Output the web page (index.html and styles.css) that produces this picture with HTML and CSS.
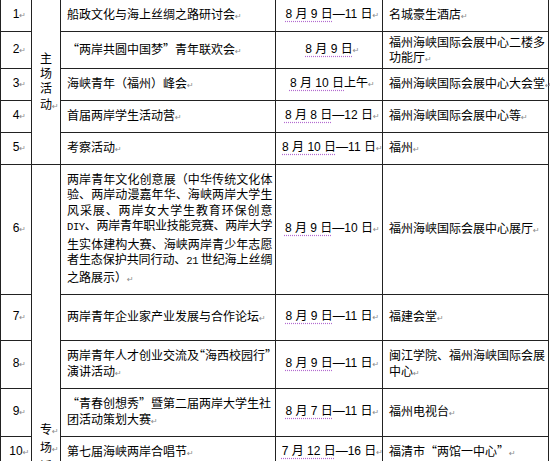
FILE: index.html
```html
<!DOCTYPE html>
<html lang="zh-CN">
<head>
<meta charset="utf-8">
<title>活动安排</title>
<link rel="stylesheet" href="styles.css">
</head>
<body>
<table class="schedule">
  <colgroup>
    <col class="c-no"><col class="c-grp"><col class="c-act"><col class="c-date"><col class="c-place">
  </colgroup>
  <tbody>
    <tr class="h32">
      <td class="no">1<span class="pm">↵</span></td>
      <td class="grp" rowspan="5"><div class="gc">主</div><div class="gc">场</div><div class="gc">活</div><div class="gc">动<span class="pm">↵</span></div></td>
      <td class="act">船政文化与海上丝绸之路研讨会<span class="pm">↵</span></td>
      <td class="date"><span class="ul">8 月 9 日</span>—11 日<span class="pm">↵</span></td>
      <td class="place">名城豪生酒店<span class="pm">↵</span></td>
    </tr>
    <tr class="h32">
      <td class="no">2<span class="pm">↵</span></td>
      <td class="act">“两岸共圆中国梦”青年联欢会<span class="pm">↵</span></td>
      <td class="date"><span class="ul">8 月 9 日</span><span class="pm">↵</span></td>
      <td class="place two">福州海峡国际会展中心二楼多<br>功能厅<span class="pm">↵</span></td>
    </tr>
    <tr class="h32">
      <td class="no">3<span class="pm">↵</span></td>
      <td class="act">海峡青年（福州）峰会<span class="pm">↵</span></td>
      <td class="date"><span class="ul">8 月 10 日</span>上午<span class="pm">↵</span></td>
      <td class="place">福州海峡国际会展中心大会堂<span class="pm">↵</span></td>
    </tr>
    <tr class="h32">
      <td class="no">4<span class="pm">↵</span></td>
      <td class="act">首届两岸学生活动营<span class="pm">↵</span></td>
      <td class="date"><span class="ul">8 月 8 日</span>—12 日<span class="pm">↵</span></td>
      <td class="place">福州海峡国际会展中心等<span class="pm">↵</span></td>
    </tr>
    <tr class="h32">
      <td class="no">5<span class="pm">↵</span></td>
      <td class="act">考察活动<span class="pm">↵</span></td>
      <td class="date"><span class="ul">8 月 10 日</span>—11 日<span class="pm">↵</span></td>
      <td class="place">福州<span class="pm">↵</span></td>
    </tr>
    <tr class="h130">
      <td class="no">6<span class="pm">↵</span></td>
      <td class="grp grp-top" rowspan="5"><div class="gclip"><div class="gc">专<span class="pm">↵</span></div><div class="gc">场<span class="pm">↵</span></div><div class="gc">活<span class="pm">↵</span></div><div class="gc">动<span class="pm">↵</span></div></div></td>
      <td class="act"><div class="just">两岸青年文化创意展（中华传统文化体<br>验、两岸动漫嘉年华、海峡两岸大学生<br>风采展、两岸女大学生教育环保创意<br><span class="lat">DIY</span>、两岸青年职业技能竞赛、两岸大学<br>生实体建构大赛、海峡两岸青少年志愿<br>者生态保护共同行动、<span class="lat">21</span> 世纪海上丝绸</div>之路展示）<span class="pm">↵</span></td>
      <td class="date"><span class="ul">8 月 9 日</span>—10 日<span class="pm">↵</span></td>
      <td class="place">福州海峡国际会展中心展厅<span class="pm">↵</span></td>
    </tr>
    <tr class="h46">
      <td class="no">7<span class="pm">↵</span></td>
      <td class="act">两岸青年企业家产业发展与合作论坛<span class="pm">↵</span></td>
      <td class="date"><span class="ul">8 月 9 日</span>—11 日<span class="pm">↵</span></td>
      <td class="place">福建会堂<span class="pm">↵</span></td>
    </tr>
    <tr class="h48">
      <td class="no">8<span class="pm">↵</span></td>
      <td class="act">两岸青年人才创业交流及<span class="hq">“</span>海西校园行<span class="hq">”</span><br>演讲活动<span class="pm">↵</span></td>
      <td class="date"><span class="ul">8 月 9 日</span>—11 日<span class="pm">↵</span></td>
      <td class="place">闽江学院、福州海峡国际会展<br>中心<span class="pm">↵</span></td>
    </tr>
    <tr class="h48">
      <td class="no">9<span class="pm">↵</span></td>
      <td class="act">“青春创想秀”暨第二届两岸大学生社<br>团活动策划大赛<span class="pm">↵</span></td>
      <td class="date"><span class="ul">8 月 7 日</span>—11 日<span class="pm">↵</span></td>
      <td class="place">福州电视台<span class="pm">↵</span></td>
    </tr>
    <tr class="h32">
      <td class="no">10<span class="pm">↵</span></td>
      <td class="act">第七届海峡两岸合唱节<span class="pm">↵</span></td>
      <td class="date"><span class="ul">7 月 12 日</span>—16 日<span class="pm">↵</span></td>
      <td class="place">福清市“两馆一中心”<span class="pm">↵</span></td>
    </tr>
  </tbody>
</table>
</body>
</html>
```
FILE: styles.css
```css
html, body {
  margin: 0;
  padding: 0;
  background: #fff;
}
body {
  overflow: hidden;
}
.schedule {
  border-collapse: collapse;
  table-layout: fixed;
  width: 548px;
  margin-top: -1px;
  font-family: "Noto Sans CJK SC", sans-serif;
  font-size: 12px;
  line-height: 15.4px;
  color: #000;
}
.c-no { width: 31px; }
.c-grp { width: 29px; }
.c-act { width: 215px; }
.c-date { width: 107px; }
.c-place { width: 166px; }

.schedule td {
  border: 1px solid #222;
  padding: 0 6px;
  vertical-align: middle;
  white-space: nowrap;
}
.h32 { height: 32px; }
.h46 { height: 46px; }
.h48 { height: 48px; }
.h130 { height: 130px; }

.schedule td.no {
  padding: 0;
  text-align: center;
  font-family: "Liberation Sans", "Noto Sans CJK SC", sans-serif;
}
.schedule td.grp {
  padding: 0;
  text-align: center;
}
.schedule td.grp-top {
  vertical-align: top;
  padding-top: 256px;
}
.gclip {
  height: 40px;
}
.gc {
  line-height: 15.4px;
}
.schedule td.act {
  padding: 0 3px 0 6px;
}
.just {
  text-align: justify;
  text-align-last: justify;
  letter-spacing: -0.4px;
}
.lat {
  font-family: "Liberation Mono", monospace;
  font-size: 10.5px;
}
.hq {
  font-feature-settings: "halt";
}
.schedule td.date {
  padding: 0;
  text-align: center;
  font-family: "Liberation Sans", "Noto Sans CJK SC", sans-serif;
}
.ul {
  text-decoration: underline dotted #b36ad0;
  text-underline-offset: 3px;
}
.pm {
  display: inline-block;
  width: 0;
  font-family: "DejaVu Sans", sans-serif;
  font-size: 8px;
  letter-spacing: 0;
  color: #8a8a8a;
  text-decoration: none;
  vertical-align: baseline;
}
.schedule td.place {
  padding: 0 2px 0 6px;
}
.schedule td.two {
  padding-top: 2px;
}
```
